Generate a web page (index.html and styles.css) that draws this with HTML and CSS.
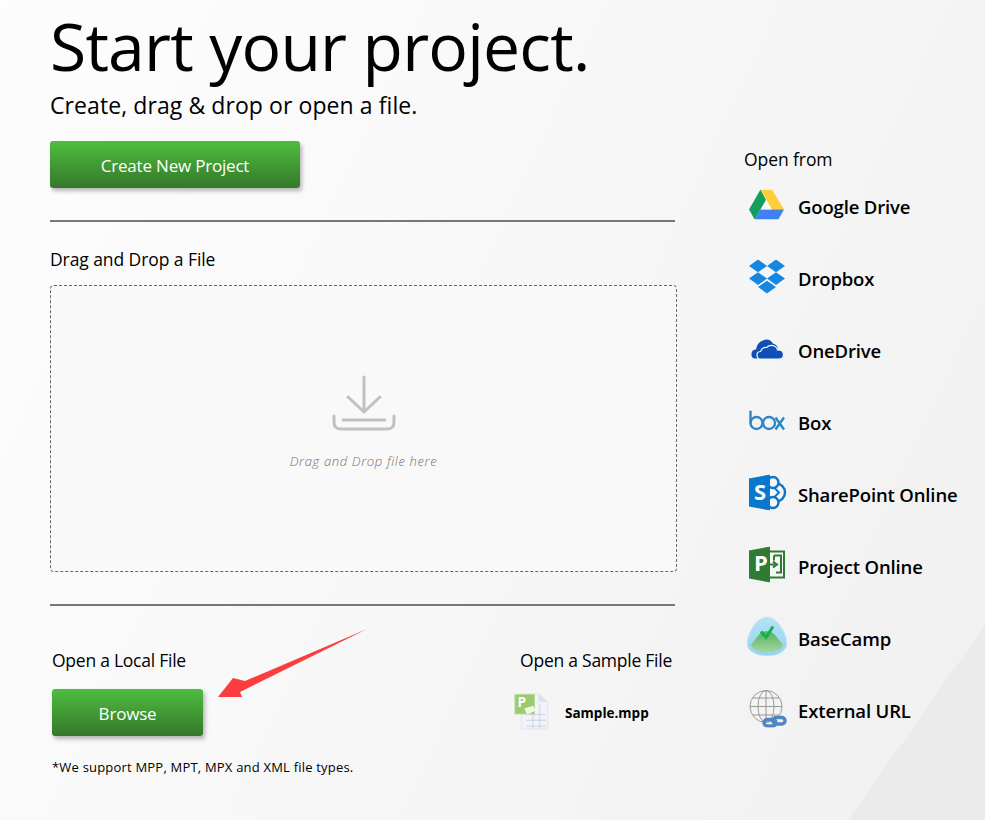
FILE: index.html
```html
<!DOCTYPE html>
<html lang="en">
<head>
<meta charset="utf-8">
<title>Start your project</title>
<link rel="stylesheet" href="styles.css">
</head>
<body>
<div class="page">
  <div class="corner"></div>
  <main class="main">
    <h1 class="title">Start your project.</h1>
    <p class="subtitle">Create, drag &amp; drop or open a file.</p>
    <button class="btn btn-create">Create New Project</button>
    <hr class="rule rule-top">
    <h2 class="label">Drag and Drop a File</h2>
    <div class="dropzone">
      <svg class="drop-icon" width="64" height="56" viewBox="0 0 64 56" fill="none" stroke="#c1c1c1" stroke-width="3" stroke-linecap="round" stroke-linejoin="round">
        <path d="M32 2V37M16 22L32 37L48 22"/>
        <path d="M2 41V47Q2 54 9 54H55Q62 54 62 47V41"/>
        <path d="M11 45H53"/>
      </svg>
      <span class="drop-text">Drag and Drop file here</span>
    </div>
    <hr class="rule rule-bottom">
    <div class="open-row">
      <section class="local">
        <h2 class="label label-local">Open a Local File</h2>
        <button class="btn btn-browse">Browse</button>
        <p class="note">*We support MPP, MPT, MPX and XML file types.</p>
      </section>
      <section class="sample">
        <h2 class="label label-local">Open a Sample File</h2>
        <div class="sample-file">
          <svg width="36" height="37" viewBox="0 0 36 38">
            <path d="M7 1H25L34 9V37H7Z" fill="#f0f3f9" stroke="#e2e5ec"/>
            <path d="M25 1V9H34Z" fill="#dde0e7"/>
            <path d="M12 22H32M12 28H32M12 34H32M19 16V37M26 12V37" stroke="#c9d2e2" fill="none"/>
            <rect x="0.500" y="1.500" width="20" height="20" fill="#9ccb6f" stroke="#b7da96"/>
            <text class="sample-p" x="3" y="14">P</text>
            <path d="M10 16L19 13L22 18L13 22Z" fill="#f3f8ea"/>
          </svg>
          <span class="sample-name">Sample.mpp</span>
        </div>
      </section>
    </div>
  </main>
  <aside class="side">
    <h2 class="label side-title">Open from</h2>
    <ul class="sources">
      <li class="source">
        <svg class="source-icon" width="35" height="30" viewBox="0 0 35 30">
          <path d="M11.500 0L0 20L5.700 30L17 10.500Z" fill="#139f5b"/>
          <path d="M11.500 0H23L35 20H23Z" fill="#fdcd3c"/>
          <path d="M5.700 30H29.300L35 20H11.500Z" fill="#3f80f3"/>
          <path d="M11.500 20H23L17 10.500Z" fill="#fff" opacity=".45"/>
        </svg>
        <span>Google Drive</span>
      </li>
      <li class="source">
        <svg class="source-icon" width="36" height="34" viewBox="0 1.800 24 20.400" preserveAspectRatio="none">
          <path fill="#1587e0" d="M6 1.800L0 5.630l6 3.820 6-3.820L6 1.800zM18 1.800l-6 3.830 6 3.820 6-3.820-6-3.830zM0 13.270l6 3.830 6-3.830L6 9.450l-6 3.820zM18 9.450l-6 3.820 6 3.830 6-3.830-6-3.820zM6 18.370l6 3.830 6-3.830-6-3.820-6 3.820z"/>
        </svg>
        <span>Dropbox</span>
      </li>
      <li class="source">
        <svg class="source-icon" width="36" height="22" viewBox="0 0 36 22">
          <path d="M9 21H6Q2 21 2.500 16Q3 12 7 12Q8 5 14 3Q20 0 24 6Q28 7 29 11L12 20Z" fill="#0f50b8"/>
          <path d="M11 21.500Q8 21.500 8 17.500Q8 14 11.500 14Q13 9.500 17.500 10Q21 6.500 25.500 8.500Q28.500 10.500 28.500 12.500Q34.500 12 34.500 17.500Q34.500 21.500 30 21.500Z" fill="#0f50b8" stroke="#f4f4f4" stroke-width="1.200"/>
        </svg>
        <span>OneDrive</span>
      </li>
      <li class="source">
        <svg class="source-icon" width="36" height="20" viewBox="0 0 36 20" fill="none" stroke="#2c86c6" stroke-width="2.400">
          <path d="M1.500 0V12.500"/>
          <circle cx="7.500" cy="12.500" r="6"/>
          <circle cx="20" cy="12.500" r="6"/>
          <path d="M26.500 7L35 19M35 7L26.500 19"/>
        </svg>
        <span>Box</span>
      </li>
      <li class="source">
        <svg class="source-icon" width="38" height="36" viewBox="0 0 38 36">
          <circle cx="27" cy="18" r="9" fill="#f6f6f6" stroke="#0877cc" stroke-width="2.400"/>
          <circle cx="24" cy="8" r="5.500" fill="#f6f6f6" stroke="#0877cc" stroke-width="2.400"/>
          <circle cx="24" cy="28" r="5.500" fill="#f6f6f6" stroke="#0877cc" stroke-width="2.400"/>
          <path d="M25 13L30 18L25 23" fill="none" stroke="#0877cc" stroke-width="2"/>
          <path d="M0 4L21 0V36L0 32Z" fill="#0877cc"/>
          <text class="logo-letter" x="5" y="25">S</text>
        </svg>
        <span>SharePoint Online</span>
      </li>
      <li class="source">
        <svg class="source-icon" width="36" height="36" viewBox="0 0 36 36">
          <rect x="16" y="5" width="19" height="26" fill="#f6f6f6" stroke="#2f7a34" stroke-width="2"/>
          <path d="M25 9H32V26H27M25 9V14M20 18H26M24 15L28 18L24 21" fill="none" stroke="#2f7a34" stroke-width="2"/>
          <path d="M0 4L21 0V36L0 32Z" fill="#2f7a34"/>
          <text class="logo-letter" x="5" y="24">P</text>
        </svg>
        <span>Project Online</span>
      </li>
      <li class="source">
        <svg class="source-icon basecamp" width="40" height="40" viewBox="0 0 40 40">
          <defs>
            <linearGradient id="camp-sky" x1="0" y1="0" x2="0" y2="1"><stop offset="0" stop-color="#b4e3f8"/><stop offset="1" stop-color="#92d4ee"/></linearGradient>
            <linearGradient id="camp-hill" x1="0" y1="0" x2="0" y2="1"><stop offset="0" stop-color="#55b45c"/><stop offset="1" stop-color="#a8d4a4"/></linearGradient>
          </defs>
          <path d="M20 0.500C31 0.500 40 18 40 27C40 35 30 39.500 20 39.500C10 39.500 0 35 0 27C0 18 9 0.500 20 0.500Z" fill="url(#camp-sky)" stroke="#d5e5ec"/>
          <path d="M4 28C8 25 13 13 20 15C26 13 31 23 36 28C36 32 27 36 20 36C12 36 4 32 4 28Z" fill="url(#camp-hill)"/>
          <path d="M14 15L19 21L26 10" fill="none" stroke="#16b24b" stroke-width="3"/>
        </svg>
        <span>BaseCamp</span>
      </li>
      <li class="source">
        <svg class="source-icon" width="38" height="38" viewBox="0 0 38 38">
          <g fill="none" stroke="#999" stroke-width="1">
            <circle cx="17" cy="17" r="16"/>
            <ellipse cx="17" cy="17" rx="8" ry="16"/>
            <path d="M17 1V33M4 8.500H30M1 17H33M4 25.500H30"/>
          </g>
          <g fill="none" stroke="#4f86c6" stroke-width="3.400">
            <rect x="15" y="30" width="12" height="6.500" rx="3.200"/>
            <rect x="24" y="28" width="12" height="6.500" rx="3.200"/>
          </g>
        </svg>
        <span>External URL</span>
      </li>
    </ul>
  </aside>
  <svg class="arrow" width="150" height="70" viewBox="0 0 150 70">
    <path d="M149 0L27 52L15 49L0 68L24 68L22 63Z" fill="#fb3d3d"/>
  </svg>
</div>
</body>
</html>
```

FILE: styles.css
```css
* { box-sizing: border-box; }
html, body { margin: 0; padding: 0; }
body {
  font-family: "Open Sans", "Noto Sans", "Liberation Sans", sans-serif;
  color: #000;
}
.page {
  position: relative;
  width: 985px;
  height: 820px;
  overflow: hidden;
  display: flex;
  padding-left: 50px;
  background: linear-gradient(115deg, #fdfdfd 0%, #f9f9f9 35%, #f0f0f0 100%);
}
.corner {
  position: absolute;
  right: 0;
  bottom: 0;
  width: 137px;
  height: 195px;
  background: #ebebeb;
  clip-path: polygon(100% 0, 100% 100%, 0 100%);
}
.main { position: relative; width: 627px; flex: none; }
.title {
  margin: 0;
  padding-top: 3px;
  font-size: 66px;
  line-height: 84px;
  font-weight: 400;
  letter-spacing: -0.8px;
  white-space: nowrap;
}
.subtitle {
  margin: 3px 0 0;
  font-size: 23px;
  line-height: 30px;
  letter-spacing: 0.08px;
}
.btn {
  display: block;
  border: 0;
  border-radius: 3px;
  color: #fff;
  font-family: inherit;
  font-size: 17px;
  letter-spacing: -0.2px;
  height: 47px;
  padding: 2px 0 0;
  background: linear-gradient(#4fbd3f, #34782a);
  box-shadow: 2px 3px 4px rgba(0,0,0,.28);
}
.btn-create { width: 250px; margin-top: 21px; }
.btn-browse { width: 151px; margin-top: 17px; }
.rule {
  width: 625px;
  height: 2px;
  border: 0;
  margin: 0;
  background: #777;
}
.rule-top { margin-top: 32px; }
.rule-bottom { margin-top: 32px; }
.label {
  margin: 0;
  font-size: 17.500px;
  line-height: 24px;
  font-weight: 400;
  letter-spacing: -0.08px;
  white-space: nowrap;
}
.label-local { letter-spacing: -0.25px; }
.rule-top + .label { margin-top: 25px; }
.dropzone {
  width: 627px;
  height: 287px;
  margin-top: 14px;
  border: 1px dashed #666;
  border-radius: 4px;
  background: #f9f9f9;
  display: flex;
  flex-direction: column;
  align-items: center;
  padding-top: 89px;
}
.drop-icon { margin-left: 1px; }
.drop-text {
  margin-top: 21px;
  font-size: 13px;
  line-height: 18px;
  font-style: italic;
  font-weight: 300;
  color: #707070;
  letter-spacing: 0.65px;
}
.open-row {
  display: flex;
  justify-content: space-between;
  width: 620px;
  margin-left: 2px;
  margin-top: 42px;
}
.note {
  margin: 22px 0 0;
  font-size: 13px;
  line-height: 18px;
  letter-spacing: 0.2px;
}
.sample { display: flex; flex-direction: column; align-items: flex-end; position: relative; }
.sample-file {
  display: flex;
  align-items: center;
  gap: 15px;
  margin-top: 21px;
  width: 158px;
  align-self: flex-start;
  margin-left: -5px;
}
.sample-name { font-size: 13.500px; font-weight: 700; position: relative; top: 1px; }
.sample-p { font-size: 14px; font-weight: 700; fill: #fff; font-family: "Open Sans", sans-serif; }
.side { margin-left: 67px; padding-top: 148px; }
.side-title { line-height: 22px; }
.sources { list-style: none; margin: 0; padding: 0; }
.source {
  position: relative;
  height: 72px;
  display: flex;
  align-items: center;
  padding-left: 54px;
  font-size: 18.500px;
  font-weight: 600;
  letter-spacing: -0.15px;
  white-space: nowrap;
}
.source-icon { position: absolute; left: 5px; top: 50%; transform: translateY(calc(-50% - 1.500px)); }
.basecamp { left: 3px; }
.logo-letter { font-size: 22px; font-weight: 700; fill: #fff; font-family: "Open Sans", sans-serif; }
.arrow { position: absolute; left: 218px; top: 629px; }
```
